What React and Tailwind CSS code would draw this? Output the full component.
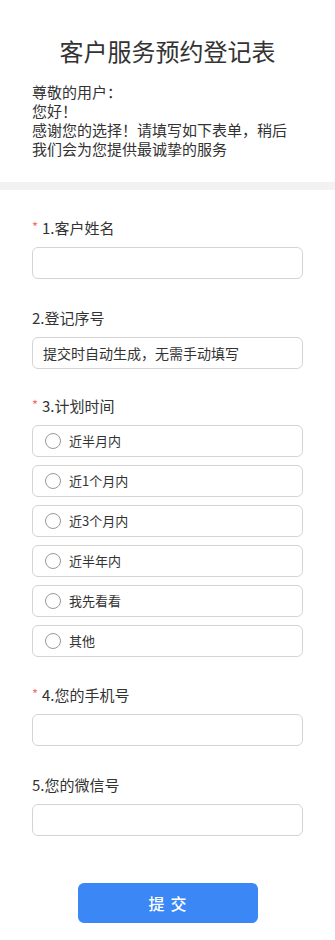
import React, { useState } from "react";

const options = ["近半月内", "近1个月内", "近3个月内", "近半年内", "我先看看", "其他"];

const Label = ({ required, children, className = "" }) => (
    <div className={`flex items-center text-[15px] leading-[22px] text-[#333] mb-2 ${className}`}>
        {required && <span className="text-[#f56c6c] text-[13px] w-[10px] leading-none -mt-1">*</span>}
        <span>{children}</span>
    </div>
);

const TextInput = ({ placeholder }) => (
    <input
        type="text"
        placeholder={placeholder}
        className="block w-full h-8 rounded-md border border-[#d4d4d4] bg-white px-[10px] text-[14px] text-[#333] placeholder:text-[#333] outline-none"
    />
);

export default function App() {
    const [plan, setPlan] = useState(null);

    return (
        <div className="w-[335px] min-h-[940px] bg-white font-['Noto_Sans_CJK_SC','Noto_Sans',sans-serif]">
            {/* Header */}
            <header className="px-8 pt-[33px] pb-[24px]">
                <h1 className="text-center text-[24px] leading-[36px] text-[#333] font-normal">客户服务预约登记表</h1>
                <p className="mt-[13px] text-[15px] leading-[19px] text-[#333]">
                    尊敬的用户：<br />
                    您好！<br />
                    感谢您的选择！请填写如下表单，稍后<br />
                    我们会为您提供最诚挚的服务
                </p>
            </header>

            <div className="h-2 bg-[#f2f2f2]" />

            {/* Form */}
            <form className="px-8 pt-[27px] pb-[17px]" onSubmit={(e) => e.preventDefault()}>
                <Label required>1.客户姓名</Label>
                <TextInput />

                <Label className="mt-7">2.登记序号</Label>
                <TextInput placeholder="提交时自动生成，无需手动填写" />

                <Label required className="mt-[26px]">3.计划时间</Label>
                <div className="flex flex-col gap-2">
                    {options.map((opt) => (
                        <label
                            key={opt}
                            onClick={() => setPlan(opt)}
                            className="flex items-center gap-2 h-8 px-3 rounded-md border border-[#d4d4d4] cursor-pointer"
                        >
                            <span className="w-4 h-4 rounded-full border border-[#999] flex items-center justify-center">
                                {plan === opt && <span className="w-2 h-2 rounded-full bg-[#3a87f5]" />}
                            </span>
                            <span className="text-[13px] text-[#333]">{opt}</span>
                        </label>
                    ))}
                </div>

                <Label required className="mt-[27px]">4.您的手机号</Label>
                <TextInput />

                <Label className="mt-7">5.您的微信号</Label>
                <TextInput />

                <div className="flex justify-center mt-[47px]">
                    <button type="submit" className="w-[180px] h-10 rounded-md bg-[#3a87f5] text-white text-[16px] font-medium tracking-[6px] pl-[6px]">
                        提交
                    </button>
                </div>
            </form>
        </div>
    );
}
